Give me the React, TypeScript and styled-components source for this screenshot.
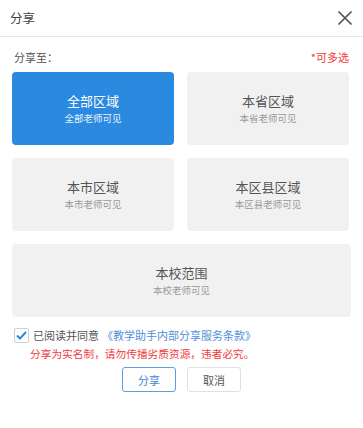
import React, { useState } from "react";
import styled, { createGlobalStyle } from "styled-components";

const Global = createGlobalStyle`
  html, body { margin: 0; padding: 0; background: #fff; }
  body { font-family: "Noto Sans CJK SC", "Noto Sans", sans-serif; }
  * { box-sizing: border-box; }
`;

const Dialog = styled.div`
  width: 363px;
  height: 428px;
  background: #fff;
  display: flex;
  flex-direction: column;
`;

const Header = styled.div`
  height: 37px;
  border-bottom: 1px solid #e6e6e6;
  display: flex;
  align-items: center;
  justify-content: space-between;
  padding: 0 10px 0 10px;
`;

const Title = styled.span`
  font-size: 12.5px;
  color: #444;
  line-height: 1;
`;

const Close = styled.button`
  border: 0;
  background: none;
  padding: 0;
  width: 16px;
  height: 16px;
  display: flex;
  cursor: pointer;
`;

const Body = styled.div`
  padding: 0 12px;
  display: flex;
  flex-direction: column;
`;

const LabelRow = styled.div`
  display: flex;
  justify-content: space-between;
  align-items: center;
  height: 40px;
  padding: 0 2px;
  margin-bottom: -5px;
  font-size: 11px;
`;

const Label = styled.span`
  color: #555;
`;

const Hint = styled.span`
  color: #f23a3a;
`;

const Grid = styled.div`
  display: grid;
  grid-template-columns: 162px 162px;
  column-gap: 13px;
  row-gap: 13px;
`;

const Card = styled.div<{ $active?: boolean; $wide?: boolean }>`
  height: 73px;
  border-radius: 4px;
  background: ${(p) => (p.$active ? "#2a8ae0" : "#f1f1f1")};
  display: flex;
  flex-direction: column;
  align-items: center;
  justify-content: center;
  gap: 3px;
  cursor: pointer;
  ${(p) => (p.$wide ? "grid-column: 1 / span 2; width: 339px;" : "")}
`;

const CardTitle = styled.div<{ $active?: boolean }>`
  font-size: 13px;
  line-height: 16px;
  color: ${(p) => (p.$active ? "#fff" : "#555")};
`;

const CardSub = styled.div<{ $active?: boolean }>`
  font-size: 9.5px;
  line-height: 13px;
  color: ${(p) => (p.$active ? "#e8f2fc" : "#999")};
`;

const Agree = styled.div`
  display: flex;
  align-items: center;
  margin-top: 10px;
  padding-left: 2px;
  font-size: 11px;
  height: 16px;
`;

const Box = styled.span`
  width: 15px;
  height: 15px;
  border: 1px solid #cfcfcf;
  border-radius: 2px;
  display: flex;
  align-items: center;
  justify-content: center;
  margin-right: 4px;
  background: #fff;
`;

const AgreeText = styled.span`
  color: #555;
`;

const Link = styled.span`
  color: #4f8fd8;
  margin-left: 3px;
`;

const Warn = styled.div`
  color: #f23a3a;
  font-size: 10.7px;
  padding-left: 18px;
  margin-top: 4px;
  line-height: 14px;
`;

const Buttons = styled.div`
  display: flex;
  justify-content: center;
  gap: 11px;
  margin-top: 6px;
`;

const Btn = styled.button<{ $primary?: boolean }>`
  width: 54px;
  height: 25px;
  border-radius: 3px;
  background: #fff;
  border: 1px solid ${(p) => (p.$primary ? "#5b9ee3" : "#e0e0e0")};
  color: ${(p) => (p.$primary ? "#3d88d8" : "#555")};
  font-family: inherit;
  font-size: 11px;
  padding: 0;
  cursor: pointer;
`;

const areas = [
  { t: "全部区域", s: "全部老师可见" },
  { t: "本省区域", s: "本省老师可见" },
  { t: "本市区域", s: "本市老师可见" },
  { t: "本区县区域", s: "本区县老师可见" },
  { t: "本校范围", s: "本校老师可见", wide: true },
];

export default function App() {
  const [sel, setSel] = useState<number[]>([0]);
  const toggle = (i: number) =>
    setSel((s) => (s.includes(i) ? s.filter((x) => x !== i) : [...s, i]));
  return (
    <Dialog>
      <Global />
      <Header>
        <Title>分享</Title>
        <Close aria-label="close">
          <svg width="16" height="16" viewBox="0 0 16 16">
            <path d="M1.5 1.5 L14.5 14.5 M14.5 1.5 L1.5 14.5" stroke="#555" strokeWidth="1.7" fill="none" />
          </svg>
        </Close>
      </Header>
      <Body>
        <LabelRow>
          <Label>分享至：</Label>
          <Hint>*可多选</Hint>
        </LabelRow>
        <Grid>
          {areas.map((a, i) => {
            const active = sel.includes(i);
            return (
              <Card key={a.t} $active={active} $wide={a.wide} onClick={() => toggle(i)}>
                <CardTitle $active={active}>{a.t}</CardTitle>
                <CardSub $active={active}>{a.s}</CardSub>
              </Card>
            );
          })}
        </Grid>
        <Agree>
          <Box>
            <svg width="11" height="9" viewBox="0 0 11 9">
              <path d="M1 4.5 L4 7.5 L10 1" stroke="#2a8ae0" strokeWidth="2" fill="none" />
            </svg>
          </Box>
          <AgreeText>已阅读并同意</AgreeText>
          <Link>《教学助手内部分享服务条款》</Link>
        </Agree>
        <Warn>分享为实名制，请勿传播劣质资源，违者必究。</Warn>
        <Buttons>
          <Btn $primary>分享</Btn>
          <Btn>取消</Btn>
        </Buttons>
      </Body>
    </Dialog>
  );
}
